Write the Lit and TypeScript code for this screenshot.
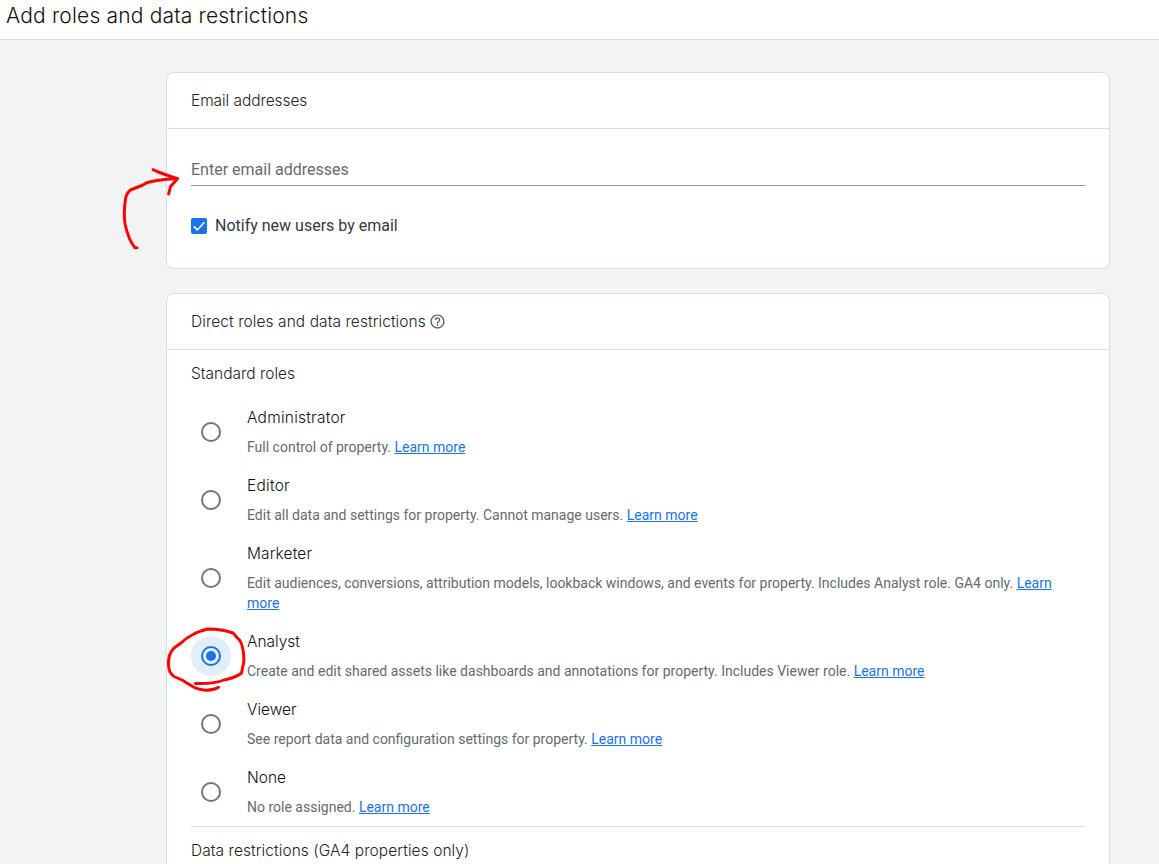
import { LitElement, html, css } from "lit";

interface Role { name: string; desc: string; selected?: boolean; track: string }

const roles: Role[] = [
  { name: "Administrator", desc: "Full control of property.", track: "wide" },
  { name: "Editor", desc: "Edit all data and settings for property. Cannot manage users.", track: "wide" },
  { name: "Marketer", desc: "Edit audiences, conversions, attribution models, lookback windows, and events for property. Includes Analyst role. GA4 only.", track: "mid" },
  { name: "Analyst", desc: "Create and edit shared assets like dashboards and annotations for property. Includes Viewer role.", selected: true, track: "" },
  { name: "Viewer", desc: "See report data and configuration settings for property.", track: "" },
  { name: "None", desc: "No role assigned.", track: "" },
];

class RoleOption extends LitElement {
  static properties = { role_: { attribute: false } };
  declare role_: Role;
  static styles = css`
    :host { display: flex; align-items: center; padding: 8px 0 9px; }
    .radio { flex: none; width: 40px; height: 40px; border-radius: 50%; display: flex; align-items: center; justify-content: center; margin-right: 16px; }
    .radio.on { background: #e3eefb; }
    .ring { box-sizing: border-box; width: 20px; height: 20px; border: 2px solid #757575; border-radius: 50%; display: flex; align-items: center; justify-content: center; }
    .on .ring { border-color: #1a73e8; }
    .dot { width: 10px; height: 10px; border-radius: 50%; background: #1a73e8; }
    .name { font: 300 15.5px/24px Inter, sans-serif; color: #101114; margin-bottom: 7px; letter-spacing: 0; }
    .name.wide { letter-spacing: 0.24px; }
    .name.mid { letter-spacing: 0.13px; }
    .desc { font: 14px/20px Roboto, sans-serif; color: #666a6f; }
    .text { flex: 1; min-width: 0; margin-right: 32px; }
    a { color: #1a73e8; text-decoration: underline; }
  `;
  render() {
    const r = this.role_;
    return html`
      <div class="radio ${r.selected ? "on" : ""}"><div class="ring">${r.selected ? html`<div class="dot"></div>` : ""}</div></div>
      <div class="text"><div class="name ${r.track}">${r.name}</div><div class="desc">${r.desc} <a>Learn more</a></div></div>`;
  }
}
customElements.define("role-option", RoleOption);

class AppRoot extends LitElement {
  static styles = css`
    :host { display: block; position: relative; box-sizing: border-box; height: 864px; overflow: hidden; background: #f1f3f4; font: 16px/24px Roboto, sans-serif; color: #3c4043; }
    header { box-sizing: border-box; height: 40px; padding: 0 6px; background: #fff; border-bottom: 1px solid #dadce0; font: 300 21px/32px Inter, sans-serif; letter-spacing: 0.18px; color: #101114; white-space: nowrap; }
    main { padding: 32px 49px 0 166px; display: flex; flex-direction: column; gap: 24px; }
    .card { box-sizing: border-box; background: #fff; border: 1px solid #dadce0; border-radius: 8px; }
    .head { box-sizing: border-box; height: 56px; padding: 0 24px; border-bottom: 1px solid #dadce0; display: flex; align-items: center; }
    .sans { font: 300 15.5px/24px Inter, sans-serif; color: #202326; }
    .tight { letter-spacing: -0.07px; }
    .loose { letter-spacing: 0.07px; }
    .help { width: 17px; height: 17px; margin-left: 3.5px; }
    .body { padding: 0 24px; }
    .email { height: 139px; }
    .field { box-sizing: border-box; height: 57px; padding-top: 29px; border-bottom: 1px solid #949494; color: #666a6f; }
    .check { display: flex; align-items: center; margin-top: 28px; gap: 8px; color: #36393d; }
    .box { width: 16px; height: 16px; border-radius: 2px; background: #1a73e8; }
    .box svg { display: block; }
    .sub { padding: 12px 0; }
    .rule { border-top: 1px solid #dadce0; }
    .ink { position: absolute; left: 0; top: 0; pointer-events: none; }
  `;
  render() {
    return html`
      <header>Add roles and data restrictions</header>
      <main>
        <section class="card">
          <div class="head sans tight">Email addresses</div>
          <div class="body email">
            <div class="field">Enter email addresses</div>
            <div class="check"><span class="box"><svg width="16" height="16" viewBox="0 0 16 16"><path d="M2.8 8.4l3.5 3.5L13.4 4.2" fill="none" stroke="#fff" stroke-width="1.5"/></svg></span><span>Notify new users by email</span></div>
          </div>
        </section>
        <section class="card">
          <div class="head sans loose"><span>Direct roles and data restrictions</span>
            <svg class="help" viewBox="0 0 24 24" fill="#5f6368"><path d="M11 18h2v-2h-2v2zm1-16C6.48 2 2 6.48 2 12s4.48 10 10 10 10-4.48 10-10S17.52 2 12 2zm0 18c-4.41 0-8-3.59-8-8s3.59-8 8-8 8 3.59 8 8-3.59 8-8 8zm0-14c-2.21 0-4 1.79-4 4h2c0-1.1.9-2 2-2s2 .9 2 2c0 2-3 1.75-3 5h2c0-2.25 3-2.5 3-5 0-2.21-1.79-4-4-4z"/></svg>
          </div>
          <div class="body">
            <div class="sub sans">Standard roles</div>
            ${roles.map((r) => html`<role-option .role_=${r}></role-option>`)}
            <div class="rule"></div>
            <div class="sub sans loose">Data restrictions (GA4 properties only)</div>
          </div>
        </section>
      </main>
      <svg class="ink" width="1159" height="864" fill="none" stroke="#ff0000" stroke-width="3" stroke-linecap="round" stroke-linejoin="round">
        <path d="M137 247.8H135C130 242 127 233 125 224Q123.5 212 125.5 199Q126.5 193 130.5 190L143 185L146.7 182.7Q155 180 177.5 178.5M153 169.7L157 171.5L165 174.5L177.5 178.7L170.5 186.5L168.7 194"/>
        <path d="M195.5 683.5Q215 684 224 680Q235 678 241.5 673L243.8 662V656Q242.5 641 237.5 638L233 633Q222 629 208 629Q199 631 193 634.5Q186 638 181 643L174 648Q168 654 168.5 664Q168.5 673 174 676.5L182 680L191 685.5Q198 690 206 690.2Q215 690 218.5 687.3"/>
      </svg>`;
  }
}
customElements.define("app-root", AppRoot);
